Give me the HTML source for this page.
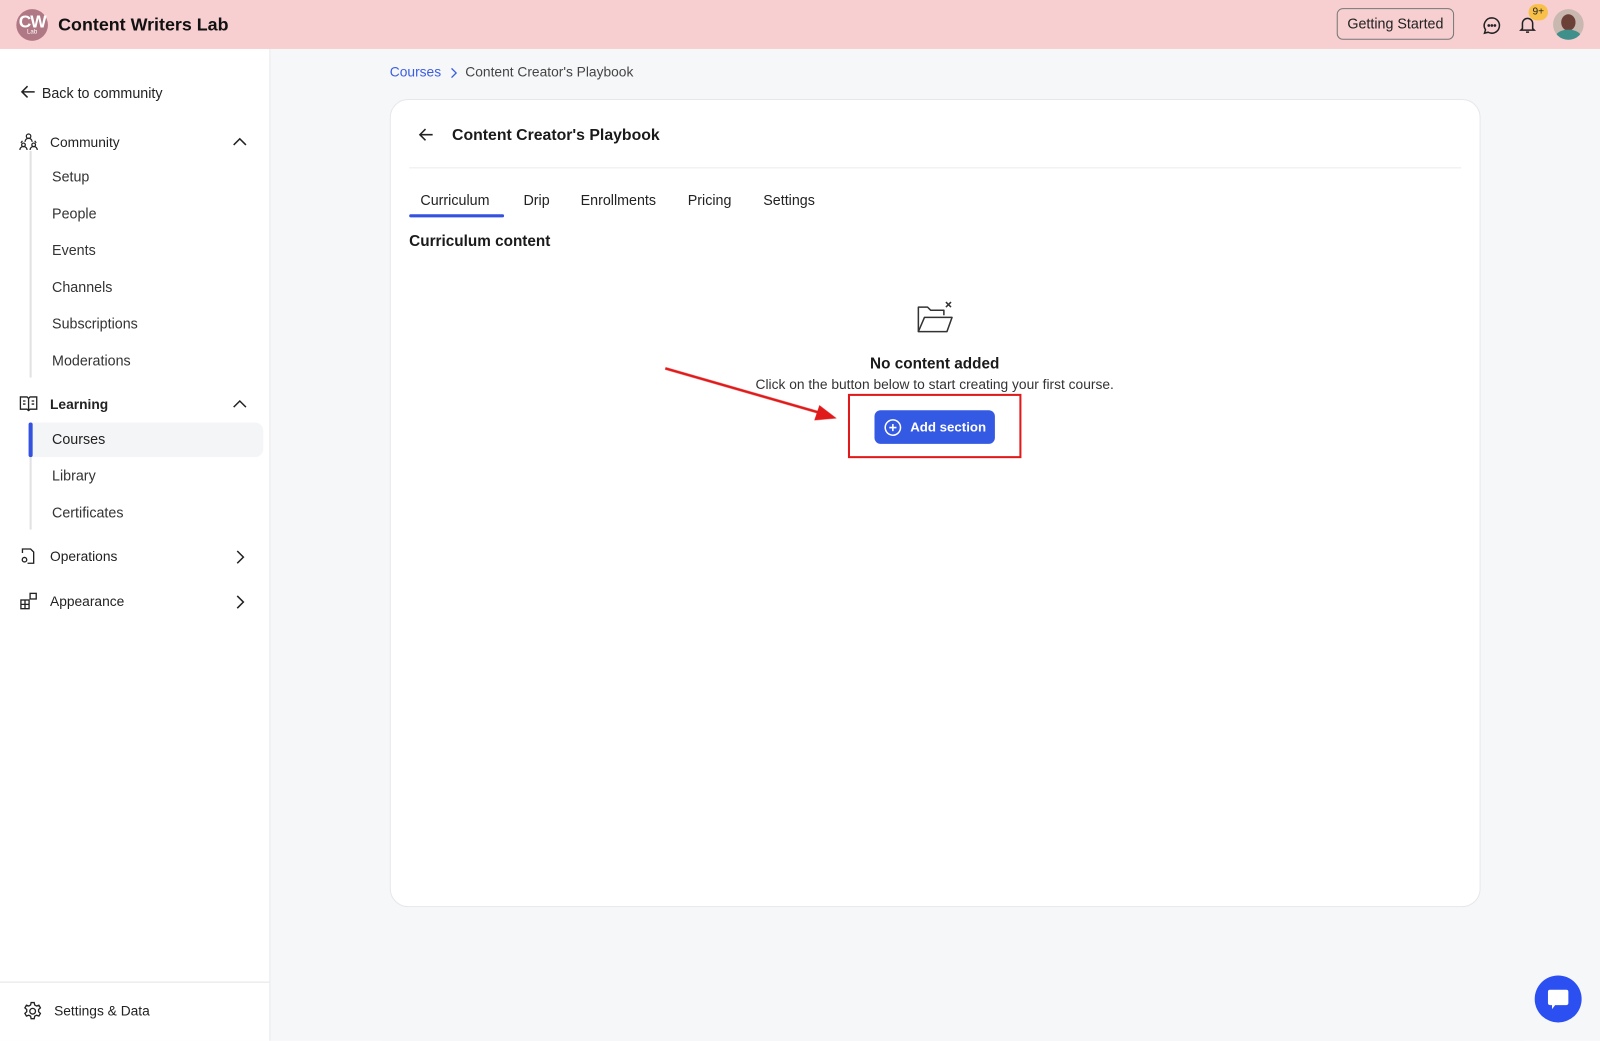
<!DOCTYPE html>
<html><head><meta charset="utf-8"><style>
html,body{margin:0;padding:0;width:1600px;height:1041px;overflow:hidden;background:#f6f7f9;font-family:"Liberation Sans",sans-serif;color:#1c1c1c}
#w{position:absolute;left:0;top:0;width:1568px;height:1020px;transform:scale(1.020408);transform-origin:0 0;background:#f6f7f9}
.a{position:absolute}
.hdr{left:0;top:0;width:1568px;height:48px;background:#f7cfd0}
.side{left:0;top:48px;width:264px;height:972px;background:#fff;border-right:1px solid #e8e8ea}
.t{position:absolute;font-size:14px;color:#222;white-space:nowrap}
.sub{position:absolute;left:51px;font-size:14px;color:#333}
svg{position:absolute}
</style></head><body><div id="w">
<div class="a hdr">
  <div class="a" style="left:16px;top:9px;width:31px;height:31px;border-radius:50%;background:#b07884;color:#fff;font-weight:bold;font-size:17px;text-align:center;line-height:26px;letter-spacing:-1px">CW<div style="position:absolute;left:0;right:0;top:19px;font-size:6px;line-height:8px;font-weight:normal;letter-spacing:0">Lab</div></div>
  <div class="t" style="left:57px;top:14px;font-size:17.5px;font-weight:bold;color:#111">Content Writers Lab</div>
  <div class="a" style="left:1310px;top:8px;width:115px;height:31px;border:1px solid #777;border-radius:6px;box-sizing:border-box;font-size:14px;text-align:center;line-height:29px;color:#222">Getting Started</div>
  <svg style="left:1452px;top:15px" width="20" height="20" viewBox="0 0 20 20" fill="none" stroke="#222" stroke-width="1.5"><path d="M10 2.5a7.5 7.5 0 1 1-3.6 14.1L2.8 17.5l1-3.3A7.5 7.5 0 0 1 10 2.5z"/><circle cx="7" cy="10" r=".6" fill="#222"/><circle cx="10" cy="10" r=".6" fill="#222"/><circle cx="13" cy="10" r=".6" fill="#222"/></svg>
  <svg style="left:1487px;top:14px" width="20" height="20" viewBox="0 0 20 20" fill="none" stroke="#222" stroke-width="1.5"><path d="M5 14V9a5 5 0 0 1 10 0v5l1.5 1.5h-13z"/><path d="M8.5 17.5h3"/></svg>
  <div class="a" style="left:1498px;top:4px;width:19px;height:16px;border-radius:8px;background:#f8c048;font-size:10px;text-align:center;line-height:16px;color:#222">9+</div>
  <div class="a" style="left:1522px;top:9px;width:30px;height:30px;border-radius:50%;overflow:hidden;background:#c9b8b0"><div class="a" style="left:8px;top:5px;width:14px;height:16px;border-radius:50%;background:#6b4036"></div><div class="a" style="left:2px;top:20px;width:26px;height:16px;border-radius:50%;background:#3f8f8a"></div></div>
</div>
<div class="a side">
  <svg style="left:20px;top:35px" width="16" height="14" viewBox="0 0 16 14" fill="none" stroke="#222" stroke-width="1.5"><path d="M14 7H2M7 1.5L1.5 7 7 12.5"/></svg>
  <div class="t" style="left:41px;top:35px">Back to community</div>
  <svg style="left:18px;top:81px" width="20" height="20" viewBox="0 0 20 20" fill="none" stroke="#222" stroke-width="1.2"><circle cx="10" cy="4.5" r="2.2"/><path d="M6.5 10a3.5 3.5 0 0 1 7 0"/><circle cx="5" cy="13" r="1.8"/><circle cx="15" cy="13" r="1.8"/><path d="M1.5 18a3.5 3.5 0 0 1 7 0M11.5 18a3.5 3.5 0 0 1 7 0M4 9l-1.5 2M16 9l1.5 2"/></svg>
  <div class="t" style="left:49px;top:84px;font-size:13.5px">Community</div>
  <svg style="left:228px;top:86px" width="14" height="9" viewBox="0 0 14 9" fill="none" stroke="#222" stroke-width="1.5"><path d="M1 8l6-6 6 6"/></svg>
  <div class="a" style="left:29px;top:100px;width:2px;height:222px;background:#e2e2e2"></div>
  <div class="sub" style="top:117px">Setup</div>
  <div class="sub" style="top:153px">People</div>
  <div class="sub" style="top:189px">Events</div>
  <div class="sub" style="top:225px">Channels</div>
  <div class="sub" style="top:261px">Subscriptions</div>
  <div class="sub" style="top:297px">Moderations</div>
  <svg style="left:19px;top:340px" width="18" height="15" viewBox="0 0 18 15" fill="none" stroke="#222" stroke-width="1.3"><path d="M1 1h6.5l1.5 1.5L10.5 1H17v12h-6.5L9 14.5 7.5 13H1zM9 2.5v12"/><path d="M3.5 5h2.5M3.5 8h2.5M12 5h2.5M12 8h2.5"/></svg>
  <div class="t" style="left:49px;top:341px;font-size:13.5px;font-weight:bold">Learning</div>
  <svg style="left:228px;top:343px" width="14" height="9" viewBox="0 0 14 9" fill="none" stroke="#222" stroke-width="1.5"><path d="M1 8l6-6 6 6"/></svg>
  <div class="a" style="left:29px;top:366px;width:2px;height:105px;background:#e2e2e2"></div>
  <div class="a" style="left:29px;top:366px;width:229px;height:34px;background:#f4f5f7;border-radius:0 8px 8px 0"></div>
  <div class="a" style="left:28px;top:366px;width:4px;height:34px;background:#3451e0;border-radius:2px"></div>
  <div class="sub" style="top:374px;color:#222">Courses</div>
  <div class="sub" style="top:410px">Library</div>
  <div class="sub" style="top:446px">Certificates</div>
  <svg style="left:19px;top:488px" width="18" height="18" viewBox="0 0 18 18" fill="none" stroke="#222" stroke-width="1.3"><path d="M3 6V2h8l3 3v11H8"/><circle cx="5" cy="12.5" r="2.2"/></svg>
  <div class="t" style="left:49px;top:490px;font-size:13.5px">Operations</div>
  <svg style="left:231px;top:491px" width="9" height="14" viewBox="0 0 9 14" fill="none" stroke="#222" stroke-width="1.5"><path d="M1.5 1l6 6-6 6"/></svg>
  <svg style="left:19px;top:532px" width="18" height="18" viewBox="0 0 18 18" fill="none" stroke="#222" stroke-width="1.3"><rect x="1.5" y="8" width="8" height="8.5"/><path d="M1.5 12.3h8M5.5 8v8.5"/><rect x="10.5" y="1.5" width="6" height="5.5"/></svg>
  <div class="t" style="left:49px;top:534px;font-size:13.5px">Appearance</div>
  <svg style="left:231px;top:535px" width="9" height="14" viewBox="0 0 9 14" fill="none" stroke="#222" stroke-width="1.5"><path d="M1.5 1l6 6-6 6"/></svg>
  <div class="a" style="left:0;top:914px;width:264px;height:1px;background:#e4e4e6"></div>
  <svg style="left:22px;top:933px" width="20" height="20" viewBox="0 0 20 20" fill="none" stroke="#222" stroke-width="1.3"><circle cx="10" cy="10" r="2.8"/><path d="M8.5 1.5h3l.5 2.4 1.8 1 2.3-.8 1.5 2.6-1.8 1.6v2.2l1.8 1.6-1.5 2.6-2.3-.8-1.8 1-.5 2.4h-3l-.5-2.4-1.8-1-2.3.8-1.5-2.6 1.8-1.6V8.3L2.4 6.7l1.5-2.6 2.3.8 1.8-1z"/></svg>
  <div class="t" style="left:53px;top:935px;font-size:13.5px">Settings &amp; Data</div>
</div>
<div class="t" style="left:382px;top:63px;color:#3b5de0;font-size:13.5px">Courses</div>
<svg style="left:441px;top:66px" width="8" height="11" viewBox="0 0 8 11" fill="none" stroke="#3b5de0" stroke-width="1.3"><path d="M1.5 1l4.5 4.5-4.5 4.5"/></svg>
<div class="t" style="left:456px;top:63px;color:#444;font-size:13.5px">Content Creator's Playbook</div>
<div class="a" style="left:382px;top:97px;width:1069px;height:792px;background:#fff;border:1px solid #e6e7ea;border-radius:18px;box-sizing:border-box"></div>
<svg style="left:410px;top:125px" width="16" height="14" viewBox="0 0 16 14" fill="none" stroke="#222" stroke-width="1.5"><path d="M14 7H2M7 1.5L1.5 7 7 12.5"/></svg>
<div class="t" style="left:443px;top:124px;font-size:15.5px;font-weight:bold;color:#1a1a1a">Content Creator's Playbook</div>
<div class="a" style="left:401px;top:164px;width:1031px;height:1px;background:#ececee"></div>
<div class="t" style="left:412px;top:188px">Curriculum</div>
<div class="t" style="left:513px;top:188px">Drip</div>
<div class="t" style="left:569px;top:188px">Enrollments</div>
<div class="t" style="left:674px;top:188px">Pricing</div>
<div class="t" style="left:748px;top:188px">Settings</div>
<div class="a" style="left:401px;top:210px;width:93px;height:3px;background:#3451e0;border-radius:2px"></div>
<div class="t" style="left:401px;top:228px;font-size:15px;font-weight:bold;color:#1a1a1a">Curriculum content</div>
<svg style="left:897px;top:293px" width="40" height="36" viewBox="0 0 40 36" fill="none" stroke="#333" stroke-width="1.5" stroke-linejoin="round"><path d="M3 32V8h9l3 3h13v5"/><path d="M3 32l6-14h27l-5 14z"/><path d="M30 3l5 5M35 3l-5 5"/></svg>
<div class="t" style="left:0;width:1832px;text-align:center;top:348px;font-size:15px;font-weight:bold;color:#1a1a1a">No content added</div>
<div class="t" style="left:0;width:1832px;text-align:center;top:369px;font-size:13.5px;color:#333">Click on the button below to start creating your first course.</div>
<div class="a" style="left:857px;top:402px;width:118px;height:33px;background:#3459e3;border-radius:6px;color:#fff;font-weight:bold;font-size:13px;line-height:33px"><svg style="left:9px;top:8px" width="18" height="18" viewBox="0 0 18 18" fill="none" stroke="#fff" stroke-width="1.5"><circle cx="9" cy="9" r="7.5"/><path d="M9 5.5v7M5.5 9h7"/></svg><span style="position:absolute;left:35px">Add section</span></div>
<div class="a" style="left:831px;top:386px;width:166px;height:59px;border:2px solid #e01a1a"></div>
<svg style="left:640px;top:355px" width="190" height="65" viewBox="0 0 190 65"><path d="M12 6L165 50" stroke="#e01a1a" stroke-width="2.5"/><path d="M180 55L158 57l5-15z" fill="#e01a1a"/></svg>
<div class="a" style="left:1504px;top:956px;width:46px;height:46px;border-radius:50%;background:#2b4ff0"><svg style="left:12px;top:13px" width="22" height="22" viewBox="0 0 22 22"><path d="M3 1h16a2 2 0 0 1 2 2v11a2 2 0 0 1-2 2H8l-3 4v-4H3a2 2 0 0 1-2-2V3a2 2 0 0 1 2-2z" fill="#fff"/></svg></div>
</div></body></html>
